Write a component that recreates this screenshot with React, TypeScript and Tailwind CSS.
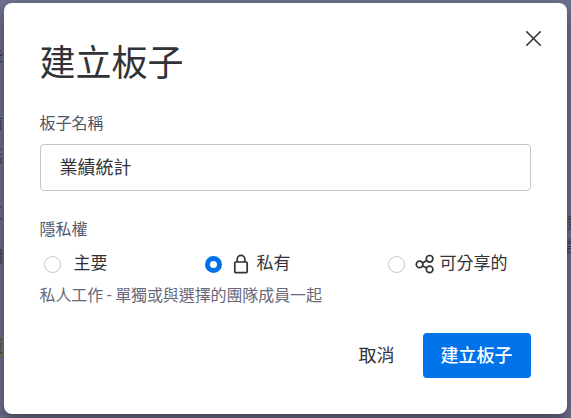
import { X } from 'lucide-react'

const FONT = 'font-["Roboto","Noto_Sans_CJK_TC","Noto_Sans_CJK_SC",sans-serif]'

function Radio({ checked }: { checked?: boolean }) {
  if (checked) {
    return <span className="size-[17px] shrink-0 rounded-full border-[5px] border-[#0073ea] bg-white" />
  }
  return <span className="size-[17px] shrink-0 rounded-full border border-[#c5c7d0] bg-white" />
}

function LockIcon() {
  return (
    <svg width="16" height="20" viewBox="0 0 16 20" fill="none" stroke="#323338" strokeWidth="1.7">
      <rect x="1.8" y="8" width="12.4" height="10.6" rx="1" />
      <path d="M4.2 8V5.2a3.8 3.8 0 0 1 7.6 0V8" />
    </svg>
  )
}

function ShareIcon() {
  return (
    <svg width="20" height="20" viewBox="0 0 20 20" fill="none" stroke="#323338" strokeWidth="1.7">
      <circle cx="4.6" cy="10.4" r="3.3" />
      <circle cx="14.6" cy="4.8" r="3.3" />
      <circle cx="14.6" cy="15.4" r="3.3" />
      <path d="M7.6 8.9l4.1-2.4M7.6 12l4.1 2" />
    </svg>
  )
}

export default function App() {
  return (
    <div className={`${FONT} relative flex h-[418px] w-[571px] overflow-hidden bg-[#6d708d] pb-1 pl-[3.5px] pr-1 pt-[3px]`}>
      {/* page behind the overlay, only slivers of it show */}
      <span className="absolute -left-[13px] top-[47px] text-[16px] leading-[18px] text-[#3f4256]">些</span>
      <span className="absolute -left-[13px] top-[115px] text-[16px] leading-[18px] text-[#3f4256]">前</span>
      <span className="absolute -left-[13px] top-[148px] text-[16px] leading-[18px] text-[#3f4256]">話</span>
      <span className="absolute -left-[13px] top-[205px] text-[16px] leading-[18px] text-[#3f4256]">三</span>
      <span className="absolute -left-[13px] top-[248px] text-[16px] leading-[18px] text-[#3f4256]">期</span>
      <span className="absolute left-0 top-[337px] h-[20px] w-[4px] bg-[#77745f]" />
      <span className="absolute -left-[13px] top-[338px] text-[16px] leading-[18px] text-[#3f4256]">頁</span>
      <span className="absolute left-[566px] top-[215px] text-[16px] leading-[18px] text-[#3f4256]">景</span>
      <span className="absolute left-[566px] top-[238px] text-[16px] leading-[18px] text-[#3f4256]">語</span>

      <div className="relative h-[411px] w-[563.5px] rounded-lg bg-white pl-9 pr-9 pt-[33px] shadow-[0_8px_16px_rgba(0,0,0,0.4)]">
        <button className="absolute right-[20px] top-[22px] text-[#323338]">
          <X size={27} strokeWidth={1.4} />
        </button>

        <h1 className="text-[36px] font-normal leading-[56px] text-[#323338]">建立板子</h1>

        <label className="mt-[21px] block text-[16px] leading-[22px] text-[#535768]">板子名稱</label>
        <div className="mt-[9px] flex h-[47px] w-[491px] items-center rounded border border-[#c5c7d0] pl-[19px] text-[18px] text-[#323338]">
          業績統計
        </div>

        <div className="mt-[28px] text-[16px] leading-[22px] text-[#535768]">隱私權</div>

        <div className="mt-[12px] flex h-[22px] items-center text-[17px] text-[#323338]">
          <div className="flex w-[164px] items-center pl-[4px]">
            <Radio />
            <span className="ml-[13px]">主要</span>
          </div>
          <div className="flex w-[183px] items-center pl-[1px]">
            <Radio checked />
            <span className="ml-[11px]"><LockIcon /></span>
            <span className="ml-[8px]">私有</span>
          </div>
          <div className="flex items-center pl-[1px]">
            <Radio />
            <span className="ml-[10px]"><ShareIcon /></span>
            <span className="ml-[5px]">可分享的</span>
          </div>
        </div>

        <p className="mt-[10px] text-[16px] leading-[22px] tracking-[-0.1px] text-[#676879]">私人工作 - 單獨或與選擇的團隊成員一起</p>

        <div className="mt-[26px] flex w-[491px] items-center justify-end">
          <button className="mr-[28px] text-[18px] text-[#323338]">取消</button>
          <button className="flex h-[45px] w-[108px] items-center justify-center rounded bg-[#0073ea] text-[18px] font-medium text-white">
            建立板子
          </button>
        </div>
      </div>
    </div>
  )
}
